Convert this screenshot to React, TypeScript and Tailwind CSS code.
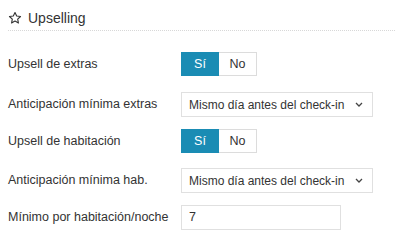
import React from "react";

function Toggle() {
  return (
    <div className="flex h-[24px]">
      <div className="w-[38px] h-full bg-[#1a8cb4] text-white flex items-center justify-center">Sí</div>
      <div className="w-[38px] h-full bg-white border border-l-0 border-[#dcdcdc] flex items-center justify-center">No</div>
    </div>
  );
}

function Select() {
  return (
    <div className="w-[192px] h-[25px] border border-[#e0e0e0] bg-white flex items-center justify-between pl-[7px] pr-[9px] text-[12px]">
      <span>Mismo día antes del check-in</span>
      <svg width="8" height="5" viewBox="0 0 8 5" fill="none">
        <path d="M1 1l3 3 3-3" stroke="#444" strokeWidth="1.3" />
      </svg>
    </div>
  );
}

export default function App() {
  return (
    <div className="w-[397px] h-[248px] bg-white text-[#333] text-[12.5px]" style={{ fontFamily: '"Liberation Sans", Arial, sans-serif' }}>
      <div className="pl-[8px] pr-[2px] pt-[9px]">
        <div className="flex items-center gap-[6px] h-[18px] text-[14px]">
          <svg width="14" height="14" viewBox="0 0 24 24" fill="none" stroke="#333" strokeWidth="1.9" strokeLinejoin="round">
            <path d="M12 2.5l2.9 6.1 6.6.8-4.9 4.6 1.3 6.6L12 17.3l-5.9 3.3 1.3-6.6-4.9-4.6 6.6-.8z" />
          </svg>
          <span>Upselling</span>
        </div>
        <div className="mt-[3px] border-t border-dotted border-[#d8d8d8]" />
      </div>
      <div className="pl-[8px] pt-[21px] flex flex-col">
        <div className="flex items-center h-[24px]">
          <div className="w-[173px]">Upsell de extras</div>
          <Toggle />
        </div>
        <div className="flex items-center h-[25px] mt-[16px]">
          <div className="w-[173px]">Anticipación mínima extras</div>
          <Select />
        </div>
        <div className="flex items-center h-[24px] mt-[12px]">
          <div className="w-[173px]">Upsell de habitación</div>
          <Toggle />
        </div>
        <div className="flex items-center h-[25px] mt-[15px]">
          <div className="w-[173px]">Anticipación mínima hab.</div>
          <Select />
        </div>
        <div className="flex items-center h-[25px] mt-[12px]">
          <div className="w-[173px]">Mínimo por habitación/noche</div>
          <div className="w-[160px] h-[25px] border border-[#e0e0e0] bg-white flex items-center pl-[7px]">7</div>
        </div>
      </div>
    </div>
  );
}
